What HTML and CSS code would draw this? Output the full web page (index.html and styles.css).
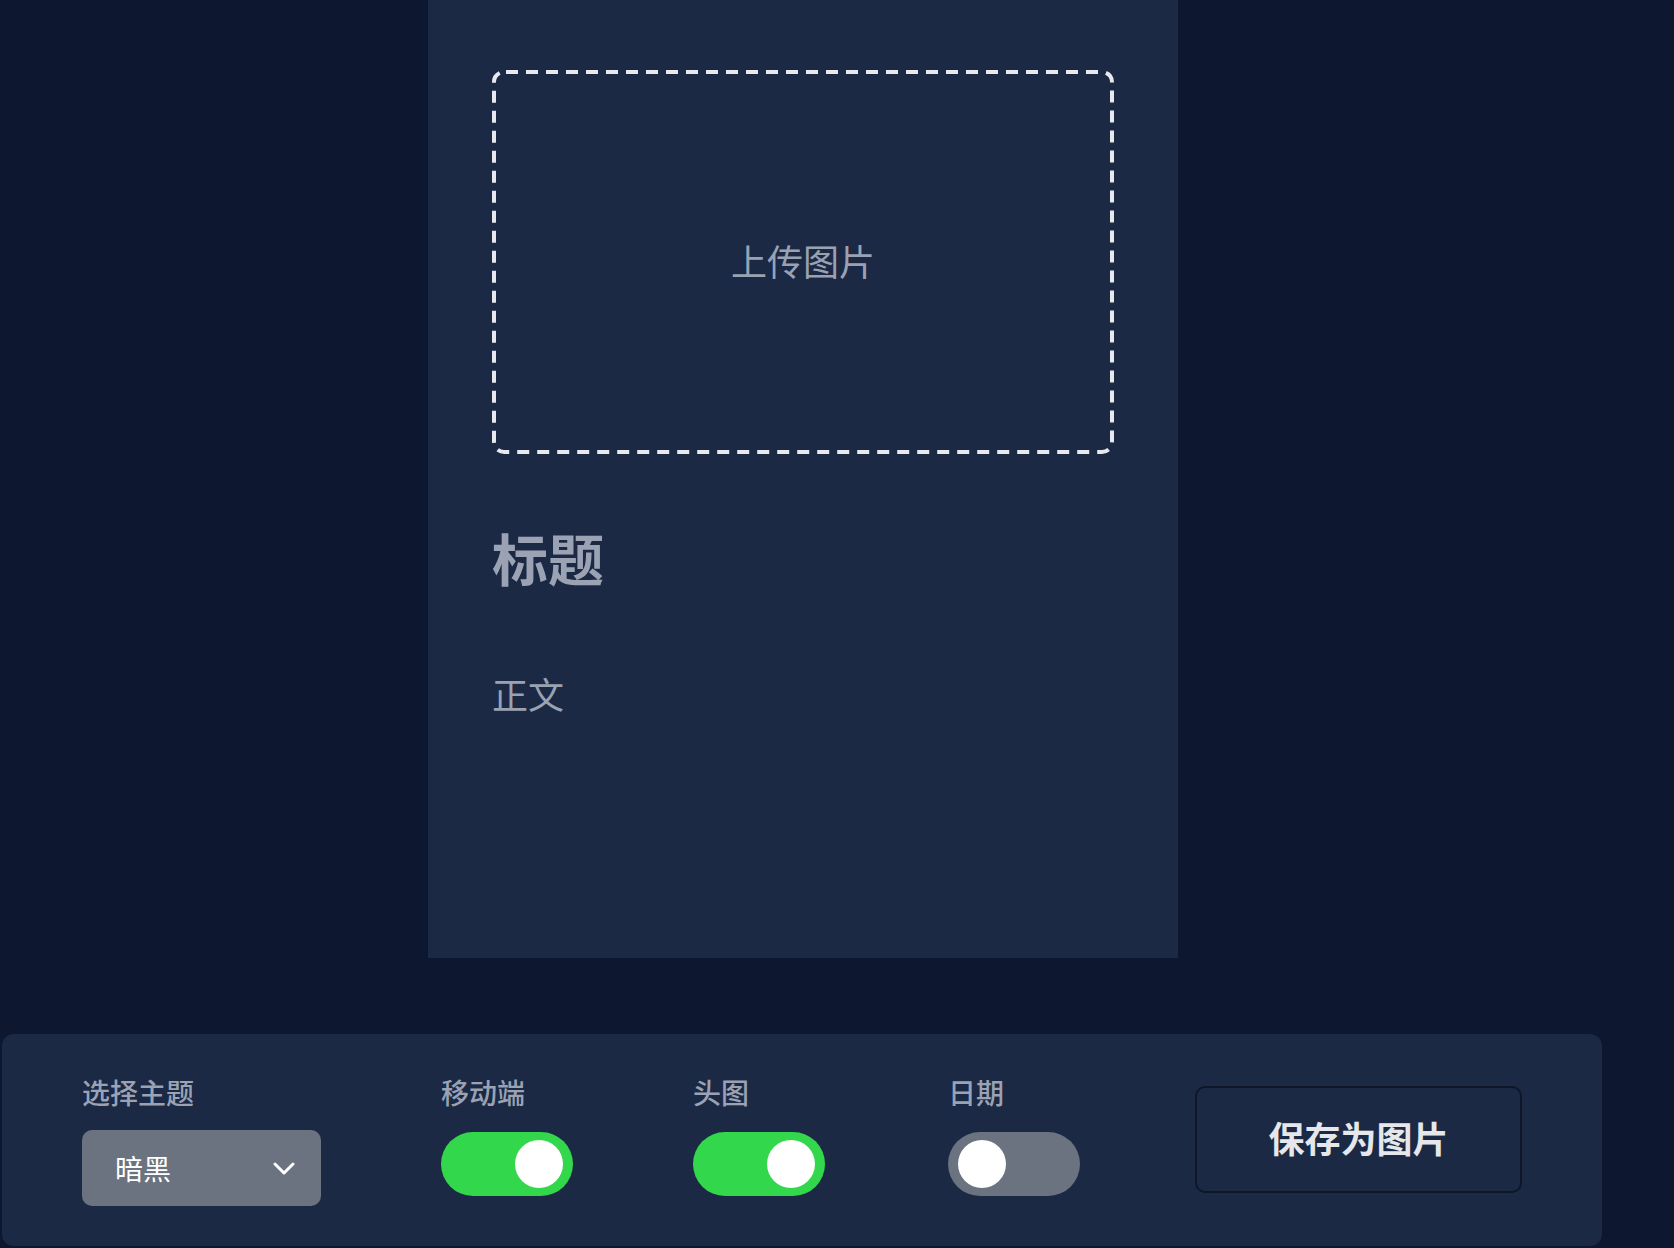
FILE: index.html
```html
<!DOCTYPE html>
<html lang="zh-CN">
<head>
<meta charset="utf-8">
<title>主题卡片</title>
<link rel="stylesheet" href="styles.css">
</head>
<body>
<div class="page">
  <main class="card">
    <div class="upload">
      <svg class="upload-frame" width="622" height="384" viewBox="0 0 622 384"><rect x="2" y="2" width="618" height="380" rx="10" ry="10" fill="none" stroke="#e8e9ee" stroke-width="4" stroke-dasharray="12 8" stroke-dashoffset="-2"/></svg>
      <span class="upload-text">上传图片</span>
    </div>
    <h1 class="title">标题</h1>
    <p class="body-text">正文</p>
  </main>
  <footer class="toolbar">
    <div class="field">
      <span class="label">选择主题</span>
      <div class="select">
        <span class="select-value">暗黑</span>
        <svg class="chevron" width="22" height="13" viewBox="0 0 22 13"><polyline points="2,2 11,11 20,2" fill="none" stroke="#ffffff" stroke-width="3" stroke-linecap="round" stroke-linejoin="round"/></svg>
      </div>
    </div>
    <div class="field">
      <span class="label">移动端</span>
      <div class="toggle on"><span class="knob"></span></div>
    </div>
    <div class="field">
      <span class="label">头图</span>
      <div class="toggle on"><span class="knob"></span></div>
    </div>
    <div class="field field-last">
      <span class="label">日期</span>
      <div class="toggle"><span class="knob"></span></div>
    </div>
    <button class="save">保存为图片</button>
  </footer>
</div>
</body>
</html>
```
FILE: styles.css
```css
* { box-sizing: border-box; }
html, body {
  margin: 0;
  padding: 0;
  background: #0d1730;
  height: 1248px;
  overflow: hidden;
}
body {
  font-family: "Noto Sans CJK SC", "Noto Sans", sans-serif;
}
.page {
  width: 1606px;
  display: flex;
  flex-direction: column;
}
.card {
  width: 750px;
  height: 958px;
  margin: 0 auto;
  background: #1b2945;
  padding: 70px 64px 0;
}
.upload {
  position: relative;
  height: 384px;
  display: flex;
  align-items: center;
  justify-content: center;
}
.upload-frame {
  position: absolute;
  left: 0;
  top: 0;
}
.upload-text {
  color: #9aa2b2;
  font-size: 36px;
  line-height: 1;
  margin-bottom: 5px;
}
.title {
  margin: 71px 0 0;
  font-size: 56px;
  line-height: 64px;
  font-weight: 700;
  color: #9aa2b3;
}
.body-text {
  margin: 79px 0 0;
  font-size: 36px;
  line-height: 50px;
  color: #9aa2b2;
}
.toolbar {
  margin: 76px 0 0 2px;
  width: 1600px;
  height: 212px;
  background: #1b2945;
  border-radius: 12px;
  display: flex;
  justify-content: flex-start;
  align-items: flex-start;
  padding: 40px 80px 0;
}
.field {
  flex-shrink: 0;
  display: flex;
  flex-direction: column;
  align-items: flex-start;
  margin-right: 120px;
}
.field-last {
  margin-left: 3px;
  margin-right: 0;
}
.label {
  font-size: 28px;
  line-height: 36px;
  font-weight: 500;
  color: #9aa2b3;
  margin-bottom: 20px;
}
.select {
  width: 239px;
  height: 76px;
  background: #6b7280;
  border-radius: 10px;
  display: flex;
  align-items: center;
  justify-content: space-between;
  padding: 0 26px 0 33px;
}
.select-value {
  color: #ffffff;
  font-size: 28px;
  line-height: 1;
}
.chevron { display: block; }
.toggle {
  width: 132px;
  height: 64px;
  margin-top: 2px;
  border-radius: 32px;
  background: #6b7280;
  display: flex;
  align-items: center;
  justify-content: flex-start;
  padding: 0 10px;
}
.toggle.on {
  background: #32d74b;
  justify-content: flex-end;
}
.knob {
  width: 48px;
  height: 48px;
  border-radius: 50%;
  background: #ffffff;
}
.save {
  flex-shrink: 0;
  margin-left: auto;
  margin-top: 12px;
  width: 327px;
  height: 107px;
  background: #1b2945;
  border: 2px solid #0e1628;
  border-radius: 10px;
  color: #e6e7eb;
  font-family: "Noto Sans CJK SC", "Noto Sans", sans-serif;
  font-size: 36px;
  font-weight: 700;
  padding: 0 0 5px;
}
```
